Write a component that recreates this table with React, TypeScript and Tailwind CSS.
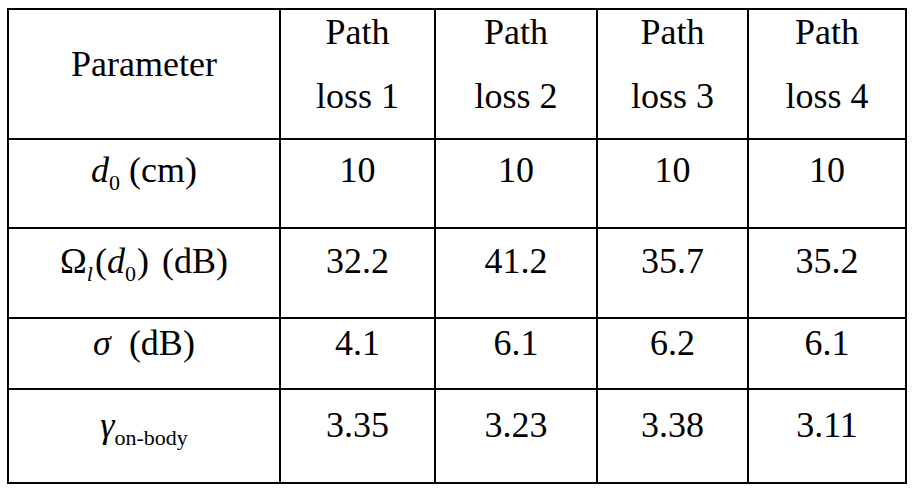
const cols = ["Path loss 1", "Path loss 2", "Path loss 3", "Path loss 4"];

const sub = "text-[22px] align-baseline relative top-[8px]";
const cell = "bg-white text-center font-['Liberation_Serif',serif]";

const rows: { label: React.ReactNode; values: string[]; pad: string }[] = [
  {
    label: (
      <span>
        <i>d</i>
        <span className={sub}>0</span> (cm)
      </span>
    ),
    values: ["10", "10", "10", "10"],
    pad: "pt-[10px]",
  },
  {
    label: (
      <span>
        Ω<span className={`${sub} italic mr-[2px]`}>l</span>(<i>d</i>
        <span className={`${sub} mr-[1px]`}>0</span>)<span className="ml-[4px]"> (dB)</span>
      </span>
    ),
    values: ["32.2", "41.2", "35.7", "35.2"],
    pad: "pt-[12px]",
  },
  {
    label: (
      <span className="whitespace-pre">
        <i>σ</i>  (dB)
      </span>
    ),
    values: ["4.1", "6.1", "6.2", "6.1"],
    pad: "pt-[4px]",
  },
  {
    label: (
      <span>
        <i>γ</i>
        <span className={sub}>on-body</span>
      </span>
    ),
    values: ["3.35", "3.23", "3.38", "3.11"],
    pad: "pt-[15px]",
  },
];

export default function App() {
  return (
    <div className="w-[914px] h-[490px] bg-white pl-[7px] pt-[8px]">
      <div className="grid w-[900px] grid-cols-[270px_153px_160px_149px_156px] grid-rows-[128px_87px_88px_69px_92px] gap-[2px] bg-black p-[2px] text-[36px] leading-[40px] text-black font-['Liberation_Serif',serif]">
        <div className={`${cell} pt-[34px]`}>Parameter</div>
        {cols.map((c) => {
          const [a, ...rest] = c.split(" ");
          return (
            <div key={c} className={`${cell} flex flex-col items-center gap-[24px] pt-[2px]`}>
              <span>{a}</span>
              <span>{rest.join(" ")}</span>
            </div>
          );
        })}
        {rows.map((r, i) => (
          <div key={i} className="contents">
            <div className={`${cell} ${r.pad}`}>{r.label}</div>
            {r.values.map((v, j) => (
              <div key={j} className={`${cell} ${r.pad}`}>
                {v}
              </div>
            ))}
          </div>
        ))}
      </div>
    </div>
  );
}
